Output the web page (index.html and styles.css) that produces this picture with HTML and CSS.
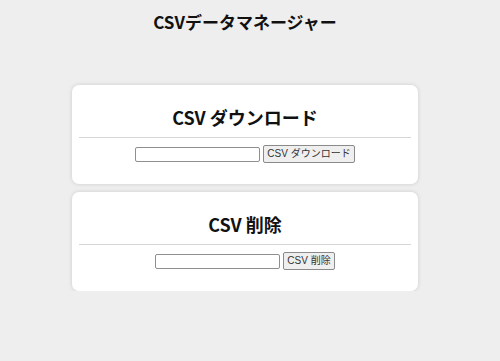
FILE: index.html
```html
<!DOCTYPE html>
<html lang="ja">
<head>
<meta charset="utf-8">
<title>CSVデータマネージャー</title>
<link rel="stylesheet" href="styles.css">
</head>
<body>
<div class="page">
  <h1 class="title">CSVデータマネージャー</h1>
  <section class="card">
    <h2 class="card-title">CSV ダウンロード</h2>
    <hr class="divider">
    <form class="row">
      <input class="field" type="text">
      <button class="btn" type="button">CSV ダウンロード</button>
    </form>
  </section>
  <section class="card">
    <h2 class="card-title">CSV 削除</h2>
    <hr class="divider">
    <form class="row">
      <input class="field" type="text">
      <button class="btn" type="button">CSV 削除</button>
    </form>
  </section>
</div>
</body>
</html>
```

FILE: styles.css
```css
html, body {
  margin: 0;
  padding: 0;
  background: #eeeeee;
}
body {
  font-family: "Noto Sans CJK JP", "Noto Sans", sans-serif;
  color: #111;
}
.page {
  width: 490px;
  display: flex;
  flex-direction: column;
  align-items: center;
}
.title {
  margin: 10px 0 0;
  font-size: 17px;
  line-height: 24px;
  font-weight: bold;
  height: 24px;
}
.card {
  box-sizing: border-box;
  width: 346px;
  background: #fff;
  border-radius: 7px;
  box-shadow: 0 0 4px rgba(0, 0, 0, 0.14);
  padding: 20px 7px 21px;
  margin-top: 51px;
}
.card + .card {
  margin-top: 8px;
}
.card-title {
  margin: 0;
  text-align: center;
  font-size: 18px;
  line-height: 24px;
  font-weight: bold;
}
.divider {
  border: 0;
  border-top: 1px solid #d6d6d6;
  margin: 8px 0 7px;
  height: 0;
}
.row {
  margin: 0;
  display: flex;
  justify-content: center;
  align-items: center;
  gap: 3px;
  height: 18px;
}
.field {
  box-sizing: border-box;
  width: 125px;
  height: 15px;
  margin: 0;
  padding: 0 2px;
  border: 1px solid #8f8f8f;
  border-radius: 2px;
  background: #fff;
  font-size: 10px;
}
.btn {
  box-sizing: border-box;
  height: 18px;
  margin: 0;
  padding: 0 3px;
  border: 1px solid #8a8a8a;
  border-radius: 2px;
  background: #efefef;
  color: #333;
  font-family: "Liberation Sans", "Noto Sans CJK JP", sans-serif;
  font-size: 10px;
  line-height: 16px;
}
```
